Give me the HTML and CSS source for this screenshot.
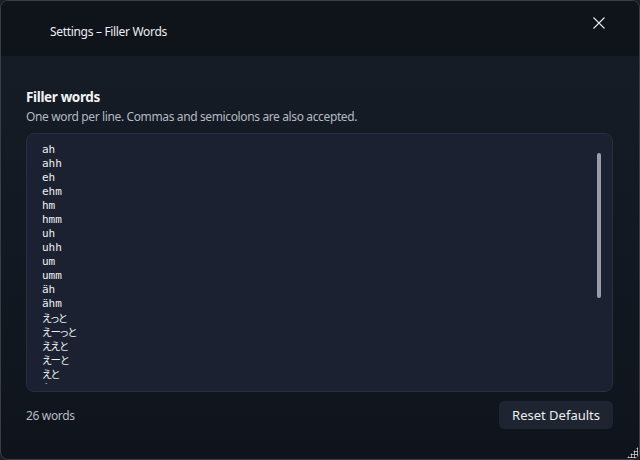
FILE: index.html
```html
<!DOCTYPE html>
<html lang="en">
<head>
<meta charset="utf-8">
<title>Settings – Filler Words</title>
<link rel="stylesheet" href="styles.css">
</head>
<body>
<div class="window">
  <header class="titlebar">
    <span class="title">Settings – Filler Words</span>
    <button class="close" aria-label="Close">
      <svg width="12" height="12" viewBox="0 0 12 12"><path d="M0.5 0.5 L11.5 11.5 M11.5 0.5 L0.5 11.5" stroke="#e6e8ec" stroke-width="1.1" fill="none"/></svg>
    </button>
  </header>
  <main class="content">
    <h2 class="heading">Filler words</h2>
    <p class="desc">One word per line. Commas and semicolons are also accepted.</p>
    <div class="editor">
      <div class="lines">ah
ahh
eh
ehm
hm
hmm
uh
uhh
um
umm
äh
ähm
<span class="cjk">えっと</span>
<span class="cjk">えーっと</span>
<span class="cjk">ええと</span>
<span class="cjk">えーと</span>
<span class="cjk">えと</span>
<span class="cjk">あのー</span>
<span class="cjk">あの</span>
<span class="cjk">その</span>
<span class="cjk">まあ</span>
<span class="cjk">なんか</span>
<span class="cjk">うーん</span>
<span class="cjk">ええ</span>
<span class="cjk">んー</span>
<span class="cjk">あー</span></div>
      <div class="scrollbar"><div class="thumb"></div></div>
    </div>
    <footer class="footer">
      <span class="count">26 words</span>
      <button class="reset">Reset Defaults</button>
    </footer>
  </main>
  <div class="grip"></div>
</div>
</body>
</html>
```
FILE: styles.css
```css
* { box-sizing: border-box; }
html, body { margin: 0; height: 100%; background: #1e1f22; }
body { font-family: "Noto Sans", "Open Sans", sans-serif; color: #e8eaee; }
.window {
  width: 640px; height: 460px;
  border: 1px solid #3a3d44;
  border-radius: 8px;
  overflow: hidden;
  display: flex; flex-direction: column;
  background: linear-gradient(180deg, #171d26 0%, #121821 60%, #0f141c 100%);
  position: relative;
}
.titlebar {
  height: 55px; flex: none;
  background: #0f131a;
  display: flex; align-items: center; justify-content: space-between;
  padding: 0 34px 0 49px;
}
.title { font-size: 12px; color: #eceef2; letter-spacing: -0.32px; padding-top: 5px; }
.close { background: none; border: 0; padding: 0; width: 12px; height: 12px; display: flex; margin-bottom: 12px; }
.content {
  flex: 1; display: flex; flex-direction: column;
  padding: 32px 26px 30px 25px;
  min-height: 0;
}
.heading { margin: 0; font-size: 13.5px; font-weight: 700; line-height: 18px; color: #f2f3f5; letter-spacing: -0.35px; }
.desc { margin: 3px 0 0; font-size: 12px; line-height: 16px; color: #b4b9c1; letter-spacing: -0.37px; }
.editor {
  margin-top: 8px;
  height: 259px; flex: none;
  background: #1b2130;
  border: 1px solid #283040;
  border-radius: 8px;
  padding: 9px 11px 7px 15px;
  display: flex; gap: 8px;
  overflow: hidden;
}
.lines {
  flex: 1;
  white-space: pre;
  font-family: "DejaVu Sans Mono", monospace;
  font-size: 11px; line-height: 14px;
  color: #eef0f3;
  overflow: hidden;
}
.cjk {
  display: inline-block;
  height: 14px;
  vertical-align: top;
  font-family: "Noto Sans CJK JP", sans-serif;
  font-size: 10.5px;
  line-height: 14px;
  font-feature-settings: "palt";
  letter-spacing: -0.9px;
}
.scrollbar { width: 4px; padding-top: 10px; }
.thumb { width: 4px; height: 145px; border-radius: 2px; background: #9a9da5; }
.footer {
  margin-top: 9px;
  display: flex; align-items: center; justify-content: space-between;
}
.count { font-size: 12px; color: #b7bcc3; letter-spacing: -0.35px; }
.reset {
  height: 28px; padding: 0 13px;
  background: #1e2430; color: #eceef2;
  border: 0; border-radius: 5px;
  font-family: inherit; font-size: 13px;
}
.grip {
  position: absolute; right: 1px; bottom: 1px;
  width: 11px; height: 11px;
  background: radial-gradient(circle, #d0d0d0 0.9px, transparent 1.3px) 0 0 / 3px 3px;
  clip-path: polygon(100% 0, 100% 100%, 0 100%);
}
```
